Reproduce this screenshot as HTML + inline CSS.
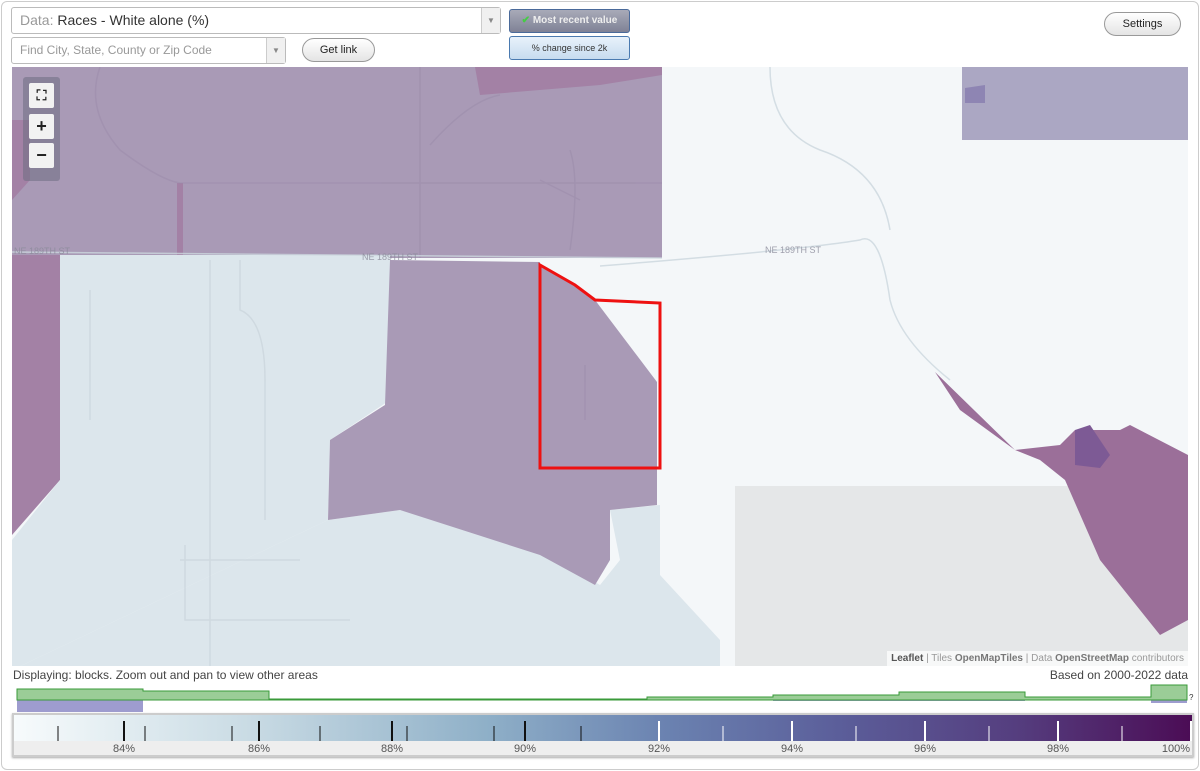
<!DOCTYPE html>
<html><head><meta charset="utf-8"><style>
body{margin:0;width:1200px;height:771px;background:#fff;font-family:"Liberation Sans",sans-serif;position:relative;overflow:hidden}
.frame{position:absolute;left:1px;top:1px;width:1196px;height:767px;border:1px solid #ccc;border-radius:6px}
.sel{position:absolute;background:#fff;border:1px solid #bbb;border-radius:3px;color:#999;font-size:14px}
.arr{position:absolute;right:0;top:0;bottom:0;width:18px;border-left:1px solid #ccc;background:#f0f0f0;color:#888;font-size:8px;text-align:center}
.btn{position:absolute;border:1px solid #999;border-radius:12px;background:linear-gradient(#fff,#e4e4e4);font-size:11px;text-align:center;color:#222}
#map{position:absolute;left:12px;top:67px;width:1176px;height:599px;overflow:hidden;background:#f4f7f9}
.ctl{position:absolute;left:11px;top:10px;width:37px;height:104px;background:rgba(110,110,130,.55);border-radius:3px}
.cb{position:absolute;left:6px;width:25px;height:25px;background:#f2f2f2;border-radius:2px;text-align:center;font-weight:bold;font-size:18px;line-height:24px;color:#222}
</style></head><body>
<div class="frame"></div>
<div class="sel" style="left:11px;top:7px;width:488px;height:25px;line-height:25px"><span style="padding-left:8px">Data: <span style="color:#333">Races - White alone (%)</span></span><div class="arr" style="line-height:25px">▼</div></div>
<div class="sel" style="left:11px;top:37px;width:273px;height:25px;line-height:25px;font-size:12px"><span style="padding-left:8px">Find City, State, County or Zip Code</span><div class="arr" style="line-height:25px">▼</div></div>
<div class="btn" style="left:302px;top:38px;width:71px;height:22px;line-height:22px">Get link</div>
<div style="position:absolute;left:509px;top:9px;width:119px;height:22px;border:1px solid #4a6a9a;border-radius:3px;background:linear-gradient(#a8aab8,#7f8296);color:#eee;font-size:10px;font-weight:bold;line-height:22px;text-align:center"><span style="color:#4c4">✔</span> Most recent value</div>
<div style="position:absolute;left:509px;top:36px;width:119px;height:22px;border:1px solid #4a7ab0;border-radius:3px;background:linear-gradient(#e8f2fb,#c7dcef);color:#333;font-size:9px;line-height:22px;text-align:center">% change since 2k</div>
<div class="btn" style="left:1104px;top:12px;width:75px;height:22px;line-height:22px">Settings</div>
<div id="map">
<svg width="1176" height="599" viewBox="12 67 1176 599" style="position:absolute;left:0;top:0">
<rect x="12" y="67" width="1176" height="599" fill="#f4f7f9"/>
<polygon points="12,67 662,67 662,258 12,258" fill="#a99ab6"/>
<polygon points="475,67 662,67 662,75 600,85 480,95" fill="#a381a5"/>
<polygon points="12,120 30,120 30,180 12,200" fill="#a381a5"/>
<rect x="177" y="183" width="6" height="75" fill="#a381a5"/>
<polygon points="12,255 60,255 60,480 12,535" fill="#a381a5"/>
<polygon points="60,255 390,255 390,400 330,440 328,520 12,670 12,540 60,480" fill="#dce6ec"/>
<polygon points="328,520 400,510 540,550 600,585 620,560 610,510 660,505 660,575 720,640 720,666 12,666 12,670" fill="#dce6ec"/>
<polygon points="390,260 540,262 540,266 575,285 595,300 657,382 657,505 610,510 610,560 595,585 540,555 400,510 328,520 330,440 385,405" fill="#a99ab6"/>
<polygon points="735,486 1188,486 1188,666 735,666" fill="#e5e7e8"/>
<polygon points="962,67 1188,67 1188,140 962,140" fill="#aba7c3"/>
<polygon points="965,88 985,85 985,103 965,103" fill="#8e85b3"/>
<polygon points="935,372 1015,450 1060,445 1075,430 1120,430 1130,425 1188,455 1188,620 1160,635 1100,560 1065,480 1040,460 1015,450 960,410" fill="#9b6f99"/>
<polygon points="1075,430 1090,425 1110,455 1100,468 1075,465" fill="#7d5a95"/>
<g stroke="#988aa8" stroke-width="1.5" fill="none" opacity=".45">
<path d="M100,67 Q85,110 120,150 Q160,180 180,183 L662,183"/><path d="M420,67 L420,258"/><path d="M430,145 Q470,100 500,95"/><path d="M540,180 L580,200"/><path d="M570,150 Q580,180 570,250"/><path d="M585,365 L585,420"/>
</g>
<g stroke="#ccd7de" stroke-width="1.5" fill="none" opacity=".8">
<path d="M90,290 L90,420"/><path d="M210,260 L210,666"/><path d="M240,260 L240,310 Q265,320 265,380 L265,520"/><path d="M180,560 L300,560"/><path d="M185,545 L185,620 L350,620"/><path d="M600,266 Q800,250 860,240 Q880,230 890,300 Q900,340 950,380"/><path d="M770,67 Q770,130 820,150 Q880,170 890,230"/>
<path d="M12,252 L662,258"/>
</g>
<polygon points="540,265 575,285 595,300 660,303 660,468 540,468" fill="none" stroke="#ee1111" stroke-width="3"/>
<g fill="#8a8a9a" font-size="9" font-family="Liberation Sans" opacity=".8"><text x="14" y="254">NE 189TH ST</text><text x="362" y="260">NE 189TH ST</text><text x="765" y="253">NE 189TH ST</text></g>
</svg>
<div class="ctl"><div class="cb" style="top:6px;font-size:14px">⛶</div><div class="cb" style="top:37px">+</div><div class="cb" style="top:66px">−</div></div>
<div style="position:absolute;right:0;bottom:0;background:rgba(255,255,255,.7);font-size:10px;color:#999;padding:2px 4px"><b style="color:#555">Leaflet</b> | Tiles <b style="color:#777">OpenMapTiles</b> | Data <b style="color:#777">OpenStreetMap</b> contributors</div>
</div>
<div style="position:absolute;left:13px;top:668px;font-size:12px;color:#444">Displaying: blocks. Zoom out and pan to view other areas</div>
<div style="position:absolute;right:12px;top:668px;font-size:12px;color:#444">Based on 2000-2022 data</div>
<svg style="position:absolute;left:0;top:684px" width="1200" height="30">
<rect x="17" y="16" width="126" height="12" fill="#9e9ccf"/>
<rect x="773" y="15" width="252" height="2" fill="#9e9ccf"/><rect x="1151" y="15" width="36" height="4" fill="#9e9ccf"/>
<path d="M17,16 V5 H143 V7 H269 V15 H647 V13 H773 V11 H899 V8 H1025 V13 H1151 V1 H1187 V16 Z" fill="#9bcd97" stroke="#3a9a3a" stroke-width="1"/>
<text x="1189" y="16" font-size="8" fill="#333">?</text>
</svg>
<div style="position:absolute;left:12px;top:713px;width:1178px;height:40px;border:2px solid #ccc;background:#eee;box-shadow:0 1px 2px #aaa">
<div style="height:26px;background:linear-gradient(90deg,#f7fbfc,#c9dbe4 20%,#8fb0c8 40%,#6b83b1 55%,#5b5e9a 70%,#553e7f 85%,#4b0c55)"></div>
<svg style="position:absolute;left:0;top:0" width="1178" height="40">
<g stroke="#111" stroke-width="1"><path d="M44,11V26M131,11V26M218,11V26M306,11V26M393,11V26M480,11V26M567,11V26"/></g>
<g stroke="#111" stroke-width="2"><path d="M110,6V26M245,6V26M378,6V26M511,6V26"/></g>
<g stroke="#fff" stroke-width="2"><path d="M645,6V26M778,6V26M911,6V26M1044,6V26M1177,6V26"/></g>
<g stroke="#fff" stroke-width="1"><path d="M709,11V26M842,11V26M975,11V26M1108,11V26"/></g>
<g font-size="11" fill="#555" text-anchor="middle" font-family="Liberation Sans"><text x="110" y="37">84%</text><text x="245" y="37">86%</text><text x="378" y="37">88%</text><text x="511" y="37">90%</text><text x="645" y="37">92%</text><text x="778" y="37">94%</text><text x="911" y="37">96%</text><text x="1044" y="37">98%</text><text x="1162" y="37">100%</text></g>
</svg></div>
</body></html>
